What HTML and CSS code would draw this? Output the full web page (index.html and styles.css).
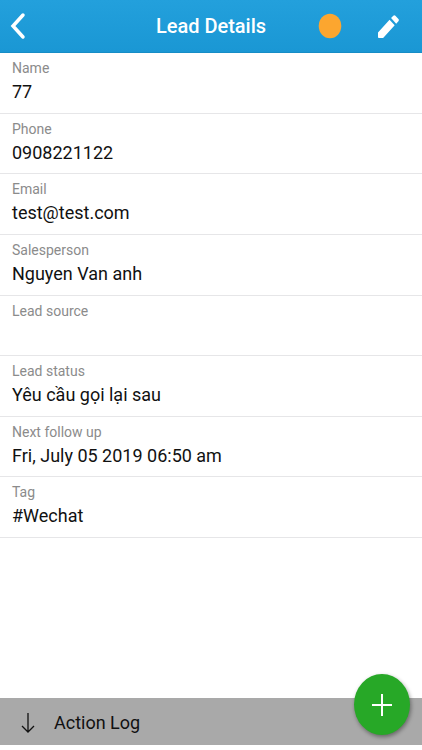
FILE: index.html
```html
<!DOCTYPE html>
<html lang="en">
<head>
<meta charset="utf-8">
<meta name="viewport" content="width=device-width, initial-scale=1">
<title>Lead Details</title>
<link rel="stylesheet" href="styles.css">
</head>
<body>
<header class="topbar">
  <button class="icon-button back" type="button" aria-label="Back">
    <svg width="16" height="28" viewBox="0 0 16 28"><path d="M13 3 3 14l10 11" fill="none" stroke="currentColor" stroke-width="3.5" stroke-linecap="round" stroke-linejoin="miter"/></svg>
  </button>
  <h1 class="title">Lead Details</h1>
  <div class="actions">
    <button class="icon-button" type="button" aria-label="Status">
      <svg width="24" height="26" viewBox="0 0 24 26"><ellipse cx="12" cy="13" rx="11.3" ry="12.2" fill="#fca62f"/></svg>
    </button>
    <button class="icon-button" type="button" aria-label="Edit">
      <svg width="21" height="23" viewBox="3 3 18 18" preserveAspectRatio="none"><path fill="currentColor" d="M3 16.600V20.300q0 .7.7.7H7.400L17.300 11.100 12.900 6.700zM20.500 7.900q.8-.9 0-1.800L17.900 3.500q-.9-.8-1.800 0L14.200 5.400 18.600 9.800z"/></svg>
    </button>
  </div>
</header>
<main class="content">
  <dl class="fields">
    <div class="field"><dt>Name</dt><dd>77</dd></div>
    <div class="field"><dt>Phone</dt><dd>0908221122</dd></div>
    <div class="field"><dt>Email</dt><dd>test@test.com</dd></div>
    <div class="field"><dt>Salesperson</dt><dd>Nguyen Van anh</dd></div>
    <div class="field"><dt>Lead source</dt><dd></dd></div>
    <div class="field"><dt>Lead status</dt><dd>Yêu cầu gọi lại sau</dd></div>
    <div class="field"><dt>Next follow up</dt><dd>Fri, July 05 2019 06:50 am</dd></div>
    <div class="field"><dt>Tag</dt><dd>#Wechat</dd></div>
  </dl>
</main>
<footer class="footer">
  <button class="action-log" type="button">
    <svg width="16" height="22" viewBox="0 0 16 22"><path d="M8 1v19M2 14l6 6 6-6" fill="none" stroke="currentColor" stroke-width="1.3"/></svg>
    Action Log
  </button>
  <button class="add" type="button" aria-label="Add">
    <svg width="22" height="24" viewBox="0 0 22 24"><path d="M11 1v22M1 12h20" fill="none" stroke="currentColor" stroke-width="2"/></svg>
  </button>
</footer>
</body>
</html>
```
FILE: styles.css
```css
* {
  box-sizing: border-box;
}

body {
  display: flex;
  flex-direction: column;
  min-height: 100vh;
  margin: 0;
  background: #fff;
  color: #111;
  font-family: Roboto, "Liberation Sans", sans-serif;
}

button {
  padding: 0;
  border: 0;
  background: none;
  color: inherit;
  font: inherit;
}

svg {
  display: block;
}

.topbar {
  display: grid;
  grid-template-columns: 1fr auto 1fr;
  align-items: center;
  padding: 12px 10px;
  border-bottom: 1px solid #168dc6;
  background: linear-gradient(#23a0dc, #1a97d4);
  color: #fff;
}

.back {
  justify-self: start;
}

.title {
  margin: 0;
  font-size: 20px;
  font-weight: 500;
  line-height: 28px;
}

.actions {
  display: flex;
  align-items: center;
  justify-content: flex-end;
  gap: 36px;
  padding-right: 13px;
}

.content {
  flex: 1;
}

.fields {
  display: grid;
  grid-auto-rows: 1fr;
  min-height: 485px;
  margin: 0;
}

.field {
  padding: 6px 12px 0;
  border-bottom: 1px solid #e6e6e8;
}

.field dt {
  color: #8b8b8b;
  font-size: 14px;
  line-height: 18px;
}

.field dd {
  min-height: 30px;
  margin: 0;
  font-size: 18px;
  line-height: 30px;
}

.footer {
  position: relative;
  margin-bottom: 5px;
  background: #a9a9a9;
}

.action-log {
  display: flex;
  align-items: center;
  gap: 18px;
  width: 100%;
  padding: 10px 20px 8px;
  font-size: 18px;
  line-height: 29px;
}

.add {
  position: absolute;
  right: 12px;
  bottom: 10px;
  display: grid;
  place-items: center;
  width: 56px;
  height: 61px;
  border-radius: 50%;
  background: #27a827;
  box-shadow: 1px 2px 4px rgba(0, 0, 0, 0.4);
  color: #fff;
}
```
